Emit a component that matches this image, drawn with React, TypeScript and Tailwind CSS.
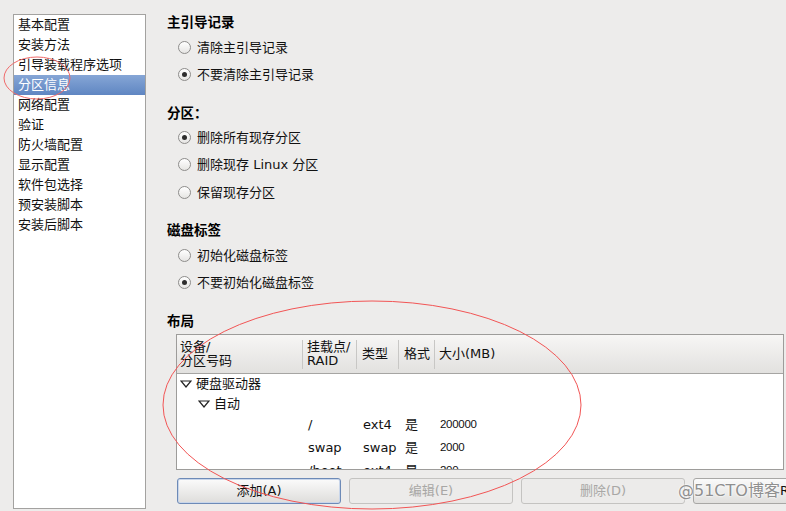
import React from "react";

const FONT = { fontFamily: '"DejaVu Sans", "Noto Sans CJK SC", sans-serif' };

function Radio({ checked, label, h }: { checked?: boolean; label: React.ReactNode; h: string }) {
  return (
    <div className={`flex items-center ${h}`}>
      <div className="ml-[11px] w-[13px] h-[13px] rounded-full border border-[#8e8d8b] bg-gradient-to-b from-[#ffffff] to-[#e6e5e3] flex items-center justify-center">
        {checked && <div className="w-[5px] h-[5px] rounded-full bg-[#2d2d2d]" />}
      </div>
      <span className="ml-[6px] text-[13px] text-[#111] leading-none">{label}</span>
    </div>
  );
}

function Heading({ children, cls }: { children: React.ReactNode; cls: string }) {
  return (
    <div className={`h-[20px] flex items-center text-[13.5px] font-bold text-black ${cls}`}>{children}</div>
  );
}

function Tri() {
  return (
    <svg width="12" height="8" viewBox="0 0 12 8" className="shrink-0">
      <polygon points="1,1 11,1 6,7" fill="none" stroke="#222" strokeWidth="1.2" />
    </svg>
  );
}

const items = [
  "基本配置",
  "安装方法",
  "引导装载程序选项",
  "分区信息",
  "网络配置",
  "验证",
  "防火墙配置",
  "显示配置",
  "软件包选择",
  "预安装脚本",
  "安装后脚本",
];

function Sep() {
  return <div className="absolute right-0 top-[5px] bottom-[4px] w-px bg-[#c8c7c5]" />;
}

export default function App() {
  return (
    <div
      className="relative w-[786px] h-[511px] bg-[#edeceb] overflow-hidden flex text-[#111]"
      style={FONT}
    >
      {/* left list */}
      <div className="ml-[13px] mt-[14px] w-[133px] h-[495px] border border-[#a3a2a0] bg-white shrink-0">
        {items.map((t, i) => (
          <div
            key={t}
            className={`h-[20px] flex items-center pl-[4px] text-[13px] ${
              i === 3 ? "bg-gradient-to-b from-[#86a6d6] to-[#5f86c2] text-white" : "text-[#111]"
            }`}
          >
            {t}
          </div>
        ))}
      </div>

      {/* right pane */}
      <div className="ml-[21px] flex-1 flex flex-col border-r border-[#a9a8a6] mr-px">
        <Heading cls="mt-[12px]">主引导记录</Heading>
        <div className="mt-[2px]">
          <Radio h="h-[26px]" label="清除主引导记录" />
          <Radio h="h-[28px]" checked label="不要清除主引导记录" />
        </div>
        <Heading cls="mt-[15px]">分区：</Heading>
        <div className="mt-[1px]">
          <Radio h="h-[26px]" checked label="删除所有现存分区" />
          <Radio h="h-[28px]" label="删除现存 Linux 分区" />
          <Radio h="h-[28px]" label="保留现存分区" />
        </div>
        <Heading cls="mt-[14px]">磁盘标签</Heading>
        <div className="mt-[2px]">
          <Radio h="h-[26px]" label="初始化磁盘标签" />
          <Radio h="h-[28px]" checked label="不要初始化磁盘标签" />
        </div>
        <Heading cls="mt-[15px]">布局</Heading>

        {/* table */}
        <div className="mt-[3px] ml-[9px] w-[608px] h-[136px] border border-[#9d9c9a] bg-white overflow-hidden flex flex-col">
          <div className="h-[39px] shrink-0 flex bg-gradient-to-b from-[#f7f6f5] to-[#e2e1df] border-b border-[#a6a5a3] text-[13px] leading-[14px]">
            <div className="relative w-[126px] pl-[3px] flex flex-col justify-center">
              <span>设备/</span>
              <span>分区号码</span>
              <Sep />
            </div>
            <div className="relative w-[54px] pl-[4px] flex flex-col justify-center">
              <span>挂载点/</span>
              <span>RAID</span>
              <Sep />
            </div>
            <div className="relative w-[42px] pl-[5px] flex items-center">
              <span>类型</span>
              <Sep />
            </div>
            <div className="relative w-[36px] pl-[5px] flex items-center">
              <span>格式</span>
              <Sep />
            </div>
            <div className="pl-[4px] flex items-center">
              <span>大小(MB)</span>
            </div>
          </div>
          <div className="flex-1 text-[13px]">
            <div className="h-[19px] flex items-center pl-[3px] gap-[4px]">
              <Tri />
              <span>硬盘驱动器</span>
            </div>
            <div className="h-[21px] flex items-center pl-[21px] gap-[4px]">
              <Tri />
              <span>自动</span>
            </div>
            {[
              ["/", "ext4", "是", "200000", "h-[21px]"],
              ["swap", "swap", "是", "2000", "h-[25px]"],
              ["/boot", "ext4", "是", "200", "h-[22px]"],
            ].map(([m, t, f, s, h]) => (
              <div key={m} className={`${h} flex items-center`}>
                <div className="w-[126px]" />
                <div className="w-[54px] pl-[5px]">{m}</div>
                <div className="w-[42px] pl-[6px]">{t}</div>
                <div className="w-[36px] pl-[6px]">{f}</div>
                <div className="pl-[5px] text-[11.5px] tracking-[-0.3px]" style={{ fontFamily: '"Liberation Sans", sans-serif' }}>
                  {s}
                </div>
              </div>
            ))}
          </div>
        </div>

        {/* buttons */}
        <div className="mt-[8px] ml-[10px] flex gap-[8px] text-[13px]">
          <div className="w-[164px] h-[26px] shrink-0 rounded-[3px] border border-[#6d8ab7] bg-gradient-to-b from-[#fbfbfb] to-[#dedddb] flex items-center justify-center shadow-[inset_0_0_0_1px_#c9d6ea]">
            添加(A)
          </div>
          <div className="w-[164px] h-[26px] shrink-0 rounded-[3px] border border-[#c4c3c1] bg-[#ecebea] text-[#a8a7a5] flex items-center justify-center">
            编辑(E)
          </div>
          <div className="w-[164px] h-[26px] shrink-0 rounded-[3px] border border-[#c4c3c1] bg-[#ecebea] text-[#a8a7a5] flex items-center justify-center">
            删除(D)
          </div>
          <div className="w-[164px] h-[26px] shrink-0 rounded-[3px] border border-[#a8a7a5] bg-gradient-to-b from-[#fafafa] to-[#e0dfdd] flex items-center pl-[86px] overflow-hidden">
            RAID
          </div>
        </div>
      </div>

      {/* annotation ellipses */}
      <svg className="absolute inset-0 pointer-events-none" width="786" height="511">
        <ellipse cx="37" cy="78" rx="33" ry="21" fill="none" stroke="#f06a6a" strokeWidth="1" />
        <ellipse cx="372" cy="405" rx="209" ry="104" fill="none" stroke="#f25555" strokeWidth="1" />
      </svg>

      {/* watermark */}
      <div
        className="absolute left-[678px] top-[481px] text-[16px] leading-[20px] text-[#8f8f8f]"
        style={{ fontFamily: '"DejaVu Sans", "Noto Sans CJK SC", sans-serif', textShadow: "0 0 2px #fff, 0 0 2px #fff" }}
      >
        @51CTO博客
      </div>
    </div>
  );
}
